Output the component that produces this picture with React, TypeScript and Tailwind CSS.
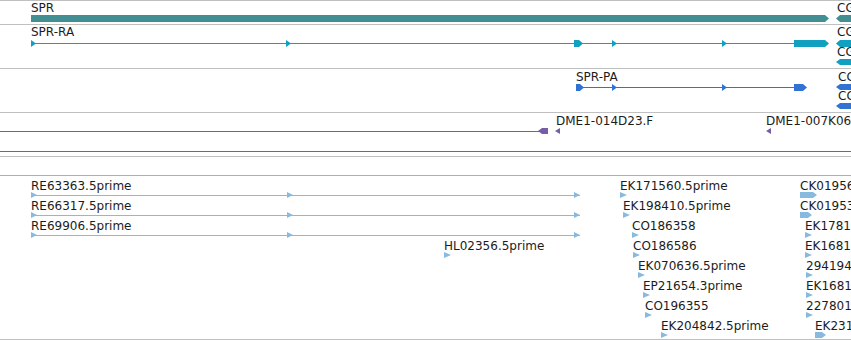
import type { ReactNode } from 'react'

const TEAL = '#428f93'
const CYAN = '#11a0bf'
const BLUE = '#3272d2'
const PURPLE = '#755da8'
const EST = '#88badf'

type Label = { x: number; b: number; t: string }

// exon pointing right / left, strand markers and intron lines, in page coords
const exR = (x1: number, x2: number, y1: number, y2: number, c: string) => (
  <polygon
    points={`${x1},${y1} ${x2 - 4},${y1} ${x2},${(y1 + y2) / 2} ${x2 - 4},${y2} ${x1},${y2}`}
    fill={c}
  />
)
const exL = (x1: number, x2: number, y1: number, y2: number, c: string) => (
  <polygon
    points={`${x1},${(y1 + y2) / 2} ${x1 + 4},${y1} ${x2},${y1} ${x2},${y2} ${x1 + 4},${y2}`}
    fill={c}
  />
)
const triR = (x: number, y1: number, y2: number, c: string, w = 6) => (
  <polygon points={`${x},${y1} ${x + w},${(y1 + y2) / 2} ${x},${y2}`} fill={c} />
)
const triL = (x: number, y1: number, y2: number, c: string, w = 5) => (
  <polygon points={`${x + w},${y1} ${x},${(y1 + y2) / 2} ${x + w},${y2}`} fill={c} />
)
const ln = (x1: number, x2: number, y: number, c: string) => (
  <rect x={x1} y={y} width={x2 - x1} height={1} fill={c} />
)

function Track({
  top,
  className,
  labels,
  children,
}: {
  top: number
  className: string
  labels: Label[]
  children: ReactNode
}) {
  const y0 = top + 1
  return (
    <div className={`relative border-t border-[#c0c0c0] ${className}`}>
      <svg className="absolute inset-0 h-full w-full overflow-visible">
        <g transform={`translate(0 ${-y0})`}>{children}</g>
      </svg>
      {labels.map((l, i) => (
        <span
          key={i}
          className="absolute whitespace-nowrap text-[12px] leading-[14px] text-[#1c1c1c]"
          style={{ left: l.x, top: l.b - 11 - y0 }}
        >
          {l.t}
        </span>
      ))}
    </div>
  )
}

// EST rows: label, x, marker kind
const estRows: { t: string; x: number; w?: number }[][] = [
  [
    { t: 'EK171560.5prime', x: 620 },
    { t: 'CK019561.5prime', x: 800, w: 17 },
  ],
  [
    { t: 'EK198410.5prime', x: 623 },
    { t: 'CK019532.5prime', x: 800, w: 12 },
  ],
  [
    { t: 'CO186358', x: 632 },
    { t: 'EK178123.5prime', x: 805 },
  ],
  [
    { t: 'HL02356.5prime', x: 444 },
    { t: 'CO186586', x: 633 },
    { t: 'EK168134.5prime', x: 805 },
  ],
  [
    { t: 'EK070636.5prime', x: 638 },
    { t: '294194', x: 806 },
  ],
  [
    { t: 'EP21654.3prime', x: 643 },
    { t: 'EK168110.5prime', x: 806 },
  ],
  [
    { t: 'CO196355', x: 645 },
    { t: '227801', x: 806 },
  ],
  [
    { t: 'EK204842.5prime', x: 661 },
    { t: 'EK231056.5prime', x: 815, w: 11 },
  ],
]

const longEst = ['RE63363.5prime', 'RE66317.5prime', 'RE69906.5prime']

export default function App() {
  const estLabels: Label[] = []
  estRows.forEach((row, k) =>
    row.forEach((f) => estLabels.push({ x: f.x, b: 190 + 20 * k, t: f.t })),
  )
  longEst.forEach((t, k) => estLabels.push({ x: 31, b: 190 + 20 * k, t }))

  return (
    <div className="h-[340px] w-[851px] overflow-hidden bg-white font-['DejaVu_Sans',sans-serif]">
      {/* gene */}
      <Track
        top={0}
        className="h-[24px]"
        labels={[
          { x: 31, b: 12, t: 'SPR' },
          { x: 837, b: 12, t: 'CG12345' },
        ]}
      >
        {exR(31, 829, 15, 22, TEAL)}
        {exL(836, 860, 15, 22, TEAL)}
      </Track>

      {/* transcripts */}
      <Track
        top={24}
        className="h-[44px]"
        labels={[
          { x: 31, b: 36, t: 'SPR-RA' },
          { x: 837, b: 36, t: 'CG12345-RA' },
          { x: 837, b: 56, t: 'CG12345-RB' },
        ]}
      >
        {ln(31, 828, 43, CYAN)}
        {triR(31, 40, 47, CYAN, 5)}
        {triR(286, 40, 47, CYAN, 5)}
        {exR(574, 583, 40, 47, CYAN)}
        {triR(612, 40, 47, CYAN, 5)}
        {triR(722, 40, 47, CYAN, 5)}
        {exR(794, 829, 40, 47, CYAN)}
        {exL(836, 860, 40, 47, CYAN)}
        {exL(836, 860, 59, 65, CYAN)}
      </Track>

      {/* proteins */}
      <Track
        top={68}
        className="h-[44px]"
        labels={[
          { x: 576, b: 81, t: 'SPR-PA' },
          { x: 838, b: 81, t: 'CG12345-PA' },
          { x: 838, b: 100, t: 'CG12345-PB' },
        ]}
      >
        {ln(576, 806, 87, BLUE)}
        {exR(576, 584, 84, 91, BLUE)}
        {triR(612, 84, 91, BLUE, 5)}
        {triR(722, 84, 91, BLUE, 5)}
        {exR(794, 807, 84, 91, BLUE)}
        {exL(836, 860, 84, 90, BLUE)}
        {exL(836, 860, 103, 109, BLUE)}
      </Track>

      {/* clones */}
      <Track
        top={112}
        className="h-[44px]"
        labels={[
          { x: 556, b: 125, t: 'DME1-014D23.F' },
          { x: 766, b: 125, t: 'DME1-007K06.F' },
        ]}
      >
        {ln(0, 540, 131, PURPLE)}
        {exL(538, 548, 128, 134, PURPLE)}
        {triL(555, 128, 134, PURPLE)}
        {triL(766, 128, 134, PURPLE)}
        {ln(0, 851, 151, PURPLE)}
      </Track>

      {/* ESTs */}
      <div className="border-b border-[#c0c0c0]">
        <Track top={156} className="h-[183px]" labels={estLabels}>
          {ln(0, 851, 175, EST)}
          {longEst.map((_, k) => (
            <g key={k}>
              {ln(31, 580, 195 + 20 * k, EST)}
              {triR(31, 192 + 20 * k, 198 + 20 * k, EST)}
              {triR(287, 192 + 20 * k, 198 + 20 * k, EST)}
              {triR(574, 192 + 20 * k, 198 + 20 * k, EST)}
            </g>
          ))}
          {estRows.map((row, k) =>
            row.map((f, j) => (
              <g key={`${k}-${j}`}>
                {f.w
                  ? exR(f.x, f.x + f.w, 192 + 20 * k, 198 + 20 * k, EST)
                  : triR(f.x, 192 + 20 * k, 198 + 20 * k, EST, 7)}
              </g>
            )),
          )}
        </Track>
      </div>
    </div>
  )
}
